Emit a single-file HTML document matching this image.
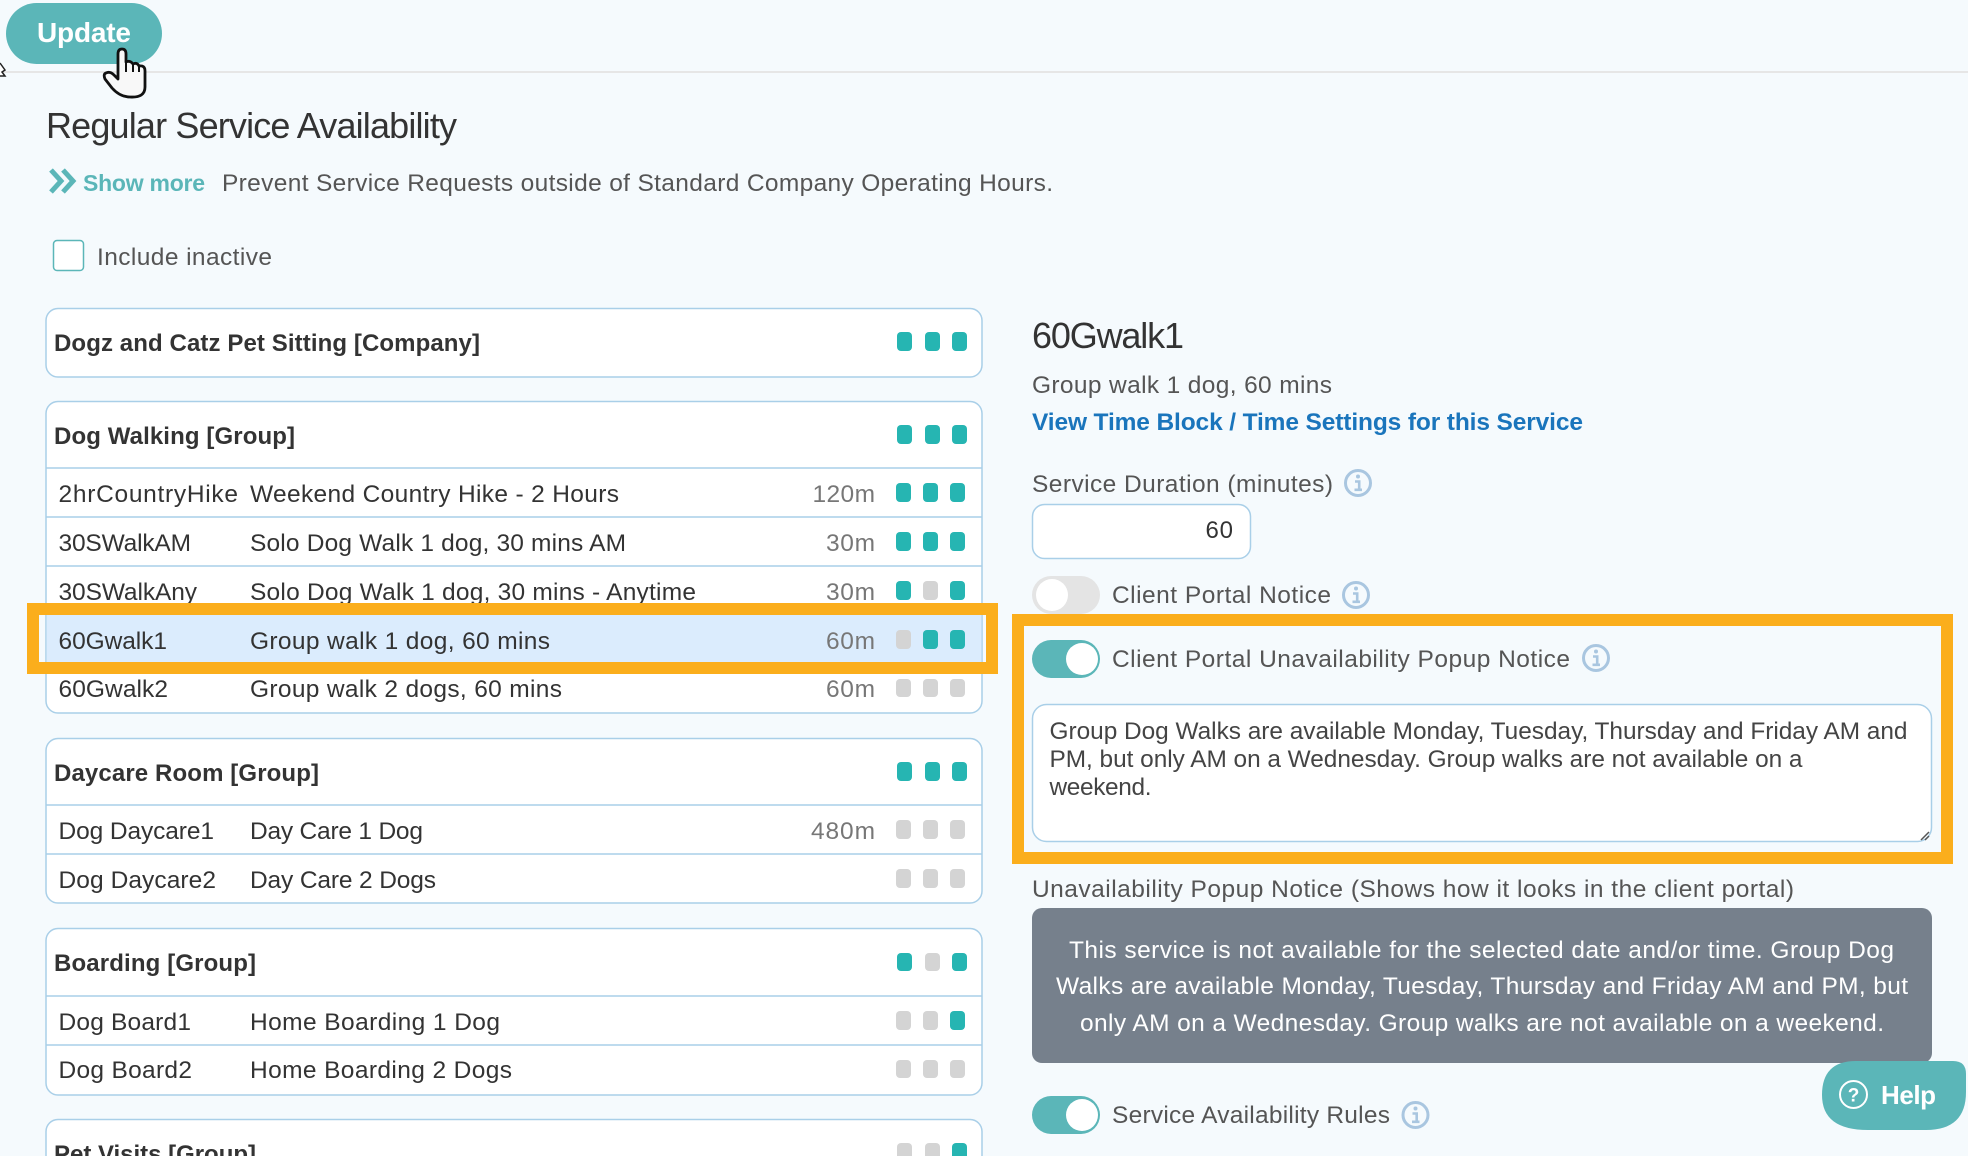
<!DOCTYPE html>
<html lang="en">
<head>
<meta charset="utf-8">
<title>Regular Service Availability</title>
<style>
html,body{margin:0;padding:0;background:#f5fafd;width:1968px;height:1156px;overflow:hidden}
svg{display:block}
text{font-family:"Liberation Sans",Arial,sans-serif;white-space:pre}
.t{font-size:24.5px;fill:#333}
.d{font-size:24.5px;fill:#777}
.h{font-size:24px;font-weight:700;fill:#333}
.l{font-size:24.5px;fill:#555}
.ta{font-size:24.4px;fill:#444}
.w{font-size:24.5px;fill:#fff}
.box{fill:#fff;stroke:#a9cfe8;stroke-width:1.5}
.div{stroke:#a9cfe8;stroke-width:1.5}
.c{fill:#26b5b2}
.g{fill:#d4d4d4}
</style>
</head>
<body>
<svg xmlns="http://www.w3.org/2000/svg" width="1968" height="1156" viewBox="0 0 1968 1156">
<defs>
<g id="info">
<circle r="12.5" fill="none" stroke="#a9c6e0" stroke-width="3"/>
<circle cx="0" cy="-6.5" r="2" fill="#a9c6e0"/>
<path d="M-3 -1.5H1.2V6M-3.5 6.8H4" fill="none" stroke="#a9c6e0" stroke-width="2.6"/>
</g>
</defs>
<rect width="1968" height="1156" fill="#f5fafd"/>

<!-- top bar -->
<rect x="0" y="71" width="1968" height="2" fill="#e6e6e6"/>
<rect x="6" y="3" width="156" height="61" rx="30.5" fill="#5bb6b8"/>
<text x="37" y="42" font-size="28" font-weight="700" fill="#fff" textLength="94" lengthAdjust="spacing">Update</text>
<path d="M0 63L5 70L2 72L5 76L0 76" fill="#fff" stroke="#222" stroke-width="1.5"/>

<!-- heading -->
<text x="46" y="138" font-size="36" fill="#333" textLength="411" lengthAdjust="spacing">Regular Service Availability</text>
<path d="M51 170L61 181L51 192M63 170L73 181L63 192" fill="none" stroke="#5bb6b8" stroke-width="5"/>
<text x="83" y="191" font-size="23" font-weight="700" fill="#5bb6b8" textLength="122" lengthAdjust="spacing">Show more</text>
<text x="222" y="191" class="l" textLength="831" lengthAdjust="spacing">Prevent Service Requests outside of Standard Company Operating Hours.</text>
<rect x="53.5" y="240.5" width="30" height="30" rx="3.5" fill="#fff" stroke="#5bb6b8" stroke-width="1.5"/>
<text x="97" y="265" class="l" textLength="175" lengthAdjust="spacing">Include inactive</text>

<!-- company box -->
<rect class="box" x="46" y="308.5" width="936" height="68.5" rx="12"/>
<text class="h" x="54" y="351" textLength="426" lengthAdjust="spacing">Dogz and Catz Pet Sitting [Company]</text>
<rect class="c" x="897" y="332" width="15" height="19" rx="4"/><rect class="c" x="925" y="332" width="15" height="19" rx="4"/><rect class="c" x="952" y="332" width="15" height="19" rx="4"/>

<!-- dog walking -->
<rect class="box" x="46" y="401.5" width="936" height="311.5" rx="12"/>
<text class="h" x="54" y="444" textLength="241" lengthAdjust="spacing">Dog Walking [Group]</text>
<rect class="c" x="897" y="425" width="15" height="19" rx="4"/><rect class="c" x="925" y="425" width="15" height="19" rx="4"/><rect class="c" x="952" y="425" width="15" height="19" rx="4"/>
<line class="div" x1="46" x2="982" y1="468" y2="468"/>
<line class="div" x1="46" x2="982" y1="517" y2="517"/>
<line class="div" x1="46" x2="982" y1="566" y2="566"/>

<text class="t" x="58.5" y="502" textLength="179.5" lengthAdjust="spacing">2hrCountryHike</text>
<text class="t" x="250" y="502" textLength="369" lengthAdjust="spacing">Weekend Country Hike - 2 Hours</text>
<text class="d" x="812.500" y="502" textLength="62.500" lengthAdjust="spacing">120m</text>
<rect class="c" x="896" y="483" width="15" height="19" rx="4"/><rect class="c" x="923" y="483" width="15" height="19" rx="4"/><rect class="c" x="950" y="483" width="15" height="19" rx="4"/>

<text class="t" x="58.5" y="551" textLength="132.5" lengthAdjust="spacing">30SWalkAM</text>
<text class="t" x="250" y="551" textLength="376" lengthAdjust="spacing">Solo Dog Walk 1 dog, 30 mins AM</text>
<text class="d" x="826" y="551" textLength="49" lengthAdjust="spacing">30m</text>
<rect class="c" x="896" y="532" width="15" height="19" rx="4"/><rect class="c" x="923" y="532" width="15" height="19" rx="4"/><rect class="c" x="950" y="532" width="15" height="19" rx="4"/>

<text class="t" x="58.5" y="600" textLength="138.5" lengthAdjust="spacing">30SWalkAny</text>
<text class="t" x="250" y="600" textLength="446" lengthAdjust="spacing">Solo Dog Walk 1 dog, 30 mins - Anytime</text>
<text class="d" x="826" y="600" textLength="49" lengthAdjust="spacing">30m</text>
<rect class="c" x="896" y="581" width="15" height="19" rx="4"/><rect class="g" x="923" y="581" width="15" height="19" rx="4"/><rect class="c" x="950" y="581" width="15" height="19" rx="4"/>

<rect x="46.500" y="615" width="935" height="47" fill="#dbecfd"/>
<text class="t" x="58.5" y="649" textLength="108.5" lengthAdjust="spacing">60Gwalk1</text>
<text class="t" x="250" y="649" textLength="300" lengthAdjust="spacing">Group walk 1 dog, 60 mins</text>
<text class="d" x="826" y="649" textLength="49" lengthAdjust="spacing">60m</text>
<rect class="g" x="896" y="630" width="15" height="19" rx="4"/><rect class="c" x="923" y="630" width="15" height="19" rx="4"/><rect class="c" x="950" y="630" width="15" height="19" rx="4"/>

<text class="t" x="58.5" y="697" textLength="109.5" lengthAdjust="spacing">60Gwalk2</text>
<text class="t" x="250" y="697" textLength="312" lengthAdjust="spacing">Group walk 2 dogs, 60 mins</text>
<text class="d" x="826" y="697" textLength="49" lengthAdjust="spacing">60m</text>
<rect class="g" x="896" y="679" width="15" height="18" rx="4"/><rect class="g" x="923" y="679" width="15" height="18" rx="4"/><rect class="g" x="950" y="679" width="15" height="18" rx="4"/>

<!-- orange highlight 1 -->
<path fill="#fbae1c" fill-rule="evenodd" d="M27 603H998V674H27ZM39 615V662H986V615Z"/>

<!-- daycare -->
<rect class="box" x="46" y="738.5" width="936" height="164.5" rx="12"/>
<text class="h" x="54" y="781" textLength="265" lengthAdjust="spacing">Daycare Room [Group]</text>
<rect class="c" x="897" y="762" width="15" height="19" rx="4"/><rect class="c" x="925" y="762" width="15" height="19" rx="4"/><rect class="c" x="952" y="762" width="15" height="19" rx="4"/>
<line class="div" x1="46" x2="982" y1="805" y2="805"/>
<line class="div" x1="46" x2="982" y1="854" y2="854"/>
<text class="t" x="58.5" y="839" textLength="155.5" lengthAdjust="spacing">Dog Daycare1</text>
<text class="t" x="250" y="839" textLength="173" lengthAdjust="spacing">Day Care 1 Dog</text>
<text class="d" x="811" y="839" textLength="64" lengthAdjust="spacing">480m</text>
<rect class="g" x="896" y="820" width="15" height="19" rx="4"/><rect class="g" x="923" y="820" width="15" height="19" rx="4"/><rect class="g" x="950" y="820" width="15" height="19" rx="4"/>
<text class="t" x="58.5" y="888" textLength="157.5" lengthAdjust="spacing">Dog Daycare2</text>
<text class="t" x="250" y="888" textLength="186" lengthAdjust="spacing">Day Care 2 Dogs</text>
<rect class="g" x="896" y="869" width="15" height="19" rx="4"/><rect class="g" x="923" y="869" width="15" height="19" rx="4"/><rect class="g" x="950" y="869" width="15" height="19" rx="4"/>

<!-- boarding -->
<rect class="box" x="46" y="928.5" width="936" height="166.5" rx="12"/>
<text class="h" x="54" y="971" textLength="202" lengthAdjust="spacing">Boarding [Group]</text>
<rect class="c" x="897" y="953" width="15" height="18" rx="4"/><rect class="g" x="925" y="953" width="15" height="18" rx="4"/><rect class="c" x="952" y="953" width="15" height="18" rx="4"/>
<line class="div" x1="46" x2="982" y1="996" y2="996"/>
<line class="div" x1="46" x2="982" y1="1045" y2="1045"/>
<text class="t" x="58.5" y="1030" textLength="132.5" lengthAdjust="spacing">Dog Board1</text>
<text class="t" x="250" y="1030" textLength="250" lengthAdjust="spacing">Home Boarding 1 Dog</text>
<rect class="g" x="896" y="1011" width="15" height="19" rx="4"/><rect class="g" x="923" y="1011" width="15" height="19" rx="4"/><rect class="c" x="950" y="1011" width="15" height="19" rx="4"/>
<text class="t" x="58.5" y="1078" textLength="133.5" lengthAdjust="spacing">Dog Board2</text>
<text class="t" x="250" y="1078" textLength="262" lengthAdjust="spacing">Home Boarding 2 Dogs</text>
<rect class="g" x="896" y="1060" width="15" height="18" rx="4"/><rect class="g" x="923" y="1060" width="15" height="18" rx="4"/><rect class="g" x="950" y="1060" width="15" height="18" rx="4"/>

<!-- pet visits -->
<rect class="box" x="46" y="1119.5" width="936" height="80" rx="12"/>
<text class="h" x="54" y="1162" textLength="202" lengthAdjust="spacing">Pet Visits [Group]</text>
<rect class="g" x="897" y="1143" width="15" height="19" rx="4"/><rect class="g" x="925" y="1143" width="15" height="19" rx="4"/><rect class="c" x="952" y="1143" width="15" height="19" rx="4"/>

<!-- right column -->
<text x="1032" y="348" font-size="36" fill="#333" textLength="152" lengthAdjust="spacing">60Gwalk1</text>
<text x="1032" y="393" class="l" textLength="300" lengthAdjust="spacing">Group walk 1 dog, 60 mins</text>
<text x="1032" y="430" font-size="24.5" font-weight="700" fill="#1a75bc" textLength="551" lengthAdjust="spacing">View Time Block / Time Settings for this Service</text>

<text x="1032" y="492" class="l" textLength="301" lengthAdjust="spacing">Service Duration (minutes)</text>
<use href="#info" x="1358" y="483"/>
<rect class="box" x="1032.500" y="504.500" width="218" height="54" rx="12"/>
<text x="1205.500" y="538" font-size="24" fill="#333" textLength="27.500" lengthAdjust="spacing">60</text>

<rect x="1032" y="576" width="68" height="38" rx="19" fill="#e4e4e4"/>
<circle cx="1052" cy="595" r="16" fill="#fff"/>
<text x="1112" y="603" class="l" textLength="219" lengthAdjust="spacing">Client Portal Notice</text>
<use href="#info" x="1356" y="595"/>

<!-- orange highlight 2 -->
<path fill="#fbae1c" fill-rule="evenodd" d="M1012 614H1953V864H1012ZM1024 626V852H1941V626Z"/>

<rect x="1032" y="640" width="68" height="38" rx="19" fill="#5bb6b8"/>
<circle cx="1082" cy="659" r="16" fill="#fff"/>
<text x="1112" y="667" class="l" textLength="458" lengthAdjust="spacing">Client Portal Unavailability Popup Notice</text>
<use href="#info" x="1596" y="658"/>

<rect class="box" x="1032.500" y="704.500" width="899" height="137" rx="14"/>
<text class="ta" x="1049.500" y="739" textLength="858" lengthAdjust="spacing">Group Dog Walks are available Monday, Tuesday, Thursday and Friday AM and</text>
<text class="ta" x="1049.500" y="767" textLength="753" lengthAdjust="spacing">PM, but only AM on a Wednesday. Group walks are not available on a</text>
<text class="ta" x="1049.500" y="795" textLength="102" lengthAdjust="spacing">weekend.</text>
<path d="M1921 840L1929 832M1925 840L1929 836" fill="none" stroke="#555" stroke-width="1.500"/>

<text x="1032" y="897" class="l" textLength="762" lengthAdjust="spacing">Unavailability Popup Notice (Shows how it looks in the client portal)</text>
<rect x="1032" y="908" width="900" height="155" rx="10" fill="#76808c"/>
<text class="w" x="1069" y="958" textLength="825" lengthAdjust="spacing">This service is not available for the selected date and/or time. Group Dog</text>
<text class="w" x="1056" y="994" textLength="852" lengthAdjust="spacing">Walks are available Monday, Tuesday, Thursday and Friday AM and PM, but</text>
<text class="w" x="1080" y="1031" textLength="804" lengthAdjust="spacing">only AM on a Wednesday. Group walks are not available on a weekend.</text>

<rect x="1032" y="1096" width="68" height="38" rx="19" fill="#5bb6b8"/>
<circle cx="1082" cy="1115" r="16" fill="#fff"/>
<text x="1112" y="1123" class="l" textLength="278" lengthAdjust="spacing">Service Availability Rules</text>
<use href="#info" x="1415.500" y="1115"/>

<!-- help -->
<path d="M1856 1061H1953Q1966 1061 1966 1074V1092Q1966 1130 1926 1130H1868Q1822 1130 1822 1095Q1822 1061 1856 1061Z" fill="#5bb6b8"/>
<circle cx="1853.500" cy="1094.500" r="13.500" fill="none" stroke="#fff" stroke-width="2"/>
<text x="1853.500" y="1101.500" font-size="19" font-weight="700" fill="#fff" text-anchor="middle">?</text>
<text x="1881" y="1104" font-size="26" font-weight="700" fill="#fff" textLength="55" lengthAdjust="spacing">Help</text>

<!-- hand cursor -->
<path d="M118 54Q118 49 122 49Q126 49 126 54V62Q130 60 133 64Q137 62 139 66Q145 65 145 71V87Q145 98 130 97Q120 97 112 88L105 79Q103 74 106 73Q110 71 114 75L118 79Z" fill="#f8f8f8" stroke="#111" stroke-width="2.800" stroke-linejoin="round"/>
<path d="M126 62V72M133 64V72M139 66V72" fill="none" stroke="#111" stroke-width="2"/>
</svg>
</body>
</html>
